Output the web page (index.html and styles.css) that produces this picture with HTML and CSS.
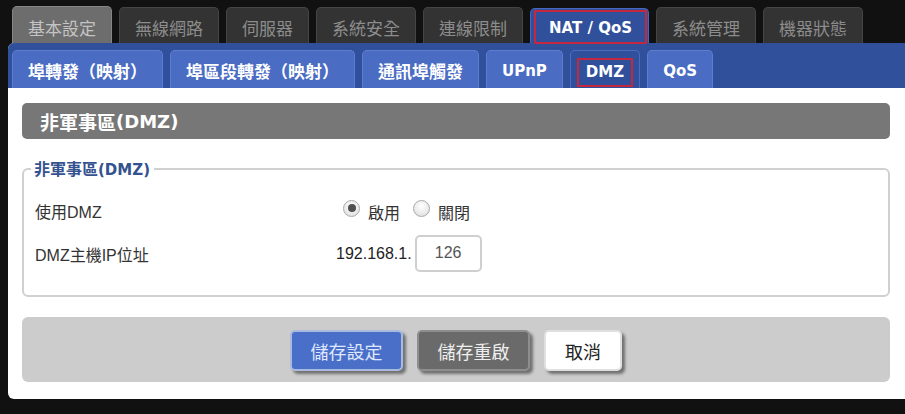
FILE: index.html
```html
<!DOCTYPE html>
<html lang="zh-Hant">
<head>
<meta charset="utf-8">
<title>NAT / QoS - DMZ</title>
<link rel="stylesheet" href="styles.css">
</head>
<body>
<nav class="topnav">
  <div class="toptab toptab-home">基本設定</div>
  <div class="toptab">無線網路</div>
  <div class="toptab">伺服器</div>
  <div class="toptab">系統安全</div>
  <div class="toptab">連線限制</div>
  <div class="toptab toptab-active"><span class="focus latin">NAT / QoS</span></div>
  <div class="toptab">系統管理</div>
  <div class="toptab">機器狀態</div>
</nav>
<div class="panel">
  <div class="subnav">
    <div class="subtab">埠轉發（映射）</div>
    <div class="subtab">埠區段轉發（映射）</div>
    <div class="subtab">通訊埠觸發</div>
    <div class="subtab latin">UPnP</div>
    <div class="subtab subtab-active latin"><span class="subfocus">DMZ</span></div>
    <div class="subtab latin">QoS</div>
  </div>
  <div class="content">
    <div class="section-title">非軍事區<span class="latin">(DMZ)</span></div>
    <fieldset class="group">
      <legend class="group-legend">非軍事區<span class="latin">(DMZ)</span></legend>
      <div class="row">
        <div class="label">使用DMZ</div>
        <div class="value">
          <span class="radio checked"></span><span class="radio-text">啟用</span>
          <span class="radio"></span><span class="radio-text">關閉</span>
        </div>
      </div>
      <div class="row">
        <div class="label">DMZ主機IP位址</div>
        <div class="value">
          <span class="ip-prefix">192.168.1.</span><span class="ip-input">126</span>
        </div>
      </div>
    </fieldset>
    <div class="actions">
      <div class="btn btn-save">儲存設定</div>
      <div class="btn btn-reboot">儲存重啟</div>
      <div class="btn btn-cancel">取消</div>
    </div>
  </div>
</div>
</body>
</html>
```
FILE: styles.css
```css
html, body {
  margin: 0;
  padding: 0;
}
body {
  background: #111111;
  font-family: "Liberation Sans", "Noto Sans CJK TC", sans-serif;
  color: #333333;
  overflow: hidden;
}
.latin {
  font-family: "DejaVu Sans", "Noto Sans CJK TC", sans-serif;
  font-weight: bold;
}

/* top navigation */
.topnav {
  display: flex;
  align-items: flex-end;
  gap: 7px;
  padding: 6px 0 0 12px;
  height: 43px;
  box-sizing: border-box;
}
.toptab {
  height: 36px;
  box-sizing: border-box;
  padding: 4px 15px 0;
  display: flex;
  align-items: center;
  justify-content: center;
  background: #333333;
  border: 1px solid #454545;
  border-bottom: none;
  border-radius: 5px 5px 0 0;
  color: #8c8c8c;
  font-family: "Noto Sans CJK TC", sans-serif;
  font-size: 17px;
  white-space: nowrap;
}
.toptab-home {
  height: 37px;
  background: #6d6d6d;
  border-color: #858585;
  color: #c4c4c4;
}
.toptab-active {
  height: 35px;
  padding: 1px 1px 0 3px;
  background: #30509b;
  border-color: #4868bd;
  align-items: stretch;
}
.focus {
  display: flex;
  align-items: center;
  justify-content: center;
  padding: 2px 13px 0;
  border: 2px solid #c4283f;
  margin-bottom: -1px;
  color: #ffffff;
  font-size: 15px;
}

/* panel */
.panel {
  margin-left: 8px;
  background: #ffffff;
  border-radius: 6px 0 0 6px;
  overflow: hidden;
}
.subnav {
  display: flex;
  align-items: flex-end;
  gap: 7px;
  height: 45px;
  box-sizing: border-box;
  padding: 0 0 0 4px;
  background: #30509b;
}
.subtab {
  height: 38px;
  box-sizing: border-box;
  padding: 2px 15px 0;
  display: flex;
  align-items: center;
  justify-content: center;
  background: #4a6cc3;
  border: 1px solid #5c7dd0;
  border-bottom: none;
  border-radius: 5px 5px 0 0;
  color: #ffffff;
  font-family: "Noto Sans CJK TC", sans-serif;
  font-weight: bold;
  font-size: 17px;
  white-space: nowrap;
}
.subtab.latin {
  font-family: "DejaVu Sans", sans-serif;
  font-size: 15px;
}
.subtab-active {
  background: #30509b;
  border-color: #4a6cc3;
  padding: 7px 6px 1px;
  align-items: stretch;
}
.subfocus {
  display: flex;
  align-items: center;
  justify-content: center;
  padding: 0 7px 2px;
  border: 2px solid #c4283f;
}

/* content */
.content {
  padding: 15px 15px 17px 14px;
}
.section-title {
  height: 36px;
  box-sizing: border-box;
  padding: 0 0 0 18px;
  display: flex;
  align-items: center;
  background: #777777;
  border-radius: 5px;
  color: #ffffff;
  font-family: "Noto Sans CJK TC", sans-serif;
  font-weight: bold;
  font-size: 19px;
}
.section-title .latin {
  font-size: 18px;
}
.group {
  margin: 18px 0 0;
  padding: 10px 8px 23px 11px;
  border: 2px solid #d0d0d0;
  border-radius: 6px;
  min-width: 0;
}
.group-legend {
  margin-left: -4px;
  padding: 0 4px 0 3px;
  line-height: 22px;
  color: #34528f;
  font-family: "Noto Sans CJK TC", sans-serif;
  font-weight: bold;
  font-size: 16px;
}
.group-legend .latin {
  font-size: 15px;
}
.row {
  display: flex;
  align-items: center;
  height: 38px;
  font-size: 16px;
}
.row + .row {
  margin-top: 5px;
}
.label {
  width: 301px;
  flex: none;
  color: #333333;
  padding-top: 2px;
}
.value {
  display: flex;
  align-items: center;
  color: #222222;
}
.radio {
  width: 17px;
  height: 17px;
  box-sizing: border-box;
  border: 1px solid #aaaaaa;
  border-radius: 50%;
  background: radial-gradient(circle at 50% 35%, #ffffff 0%, #e6e6e6 70%, #d4d4d4 100%);
  margin: 0 8px 4px 7px;
  display: flex;
  align-items: center;
  justify-content: center;
}
.radio.checked::after {
  content: "";
  width: 8px;
  height: 8px;
  border-radius: 50%;
  background: #505050;
}
.radio-text {
  padding-top: 4px;
  margin-right: 6px;
  font-family: "Noto Sans CJK TC", sans-serif;
  color: #333333;
}
.ip-prefix {
  margin-right: 3px;
  padding-top: 2px;
}
.ip-input {
  width: 67px;
  height: 37px;
  box-sizing: border-box;
  border: 2px solid #cfcfcf;
  border-radius: 5px;
  display: flex;
  align-items: center;
  justify-content: center;
  color: #555555;
  font-size: 16px;
}

/* actions */
.actions {
  margin-top: 20px;
  height: 65px;
  display: flex;
  align-items: center;
  justify-content: center;
  gap: 14px;
  background: #cccccc;
  border-radius: 6px;
  padding-top: 2px;
  box-sizing: border-box;
}
.btn {
  height: 41px;
  box-sizing: border-box;
  display: flex;
  align-items: center;
  justify-content: center;
  border: 2px solid;
  border-radius: 5px;
  font-family: "Noto Sans CJK TC", sans-serif;
  font-size: 18px;
  box-shadow: 3px 3px 3px rgba(0, 0, 0, 0.45);
}
.btn-save {
  width: 113px;
  background: #4a6fc8;
  border-color: #a9badf;
  color: #dfe8ff;
}
.btn-reboot {
  width: 113px;
  background: #6a6a6a;
  border-color: #8e8e8e;
  color: #eeeeee;
}
.btn-cancel {
  width: 78px;
  background: #ffffff;
  border-color: #e0e0e0;
  color: #222222;
}
```
